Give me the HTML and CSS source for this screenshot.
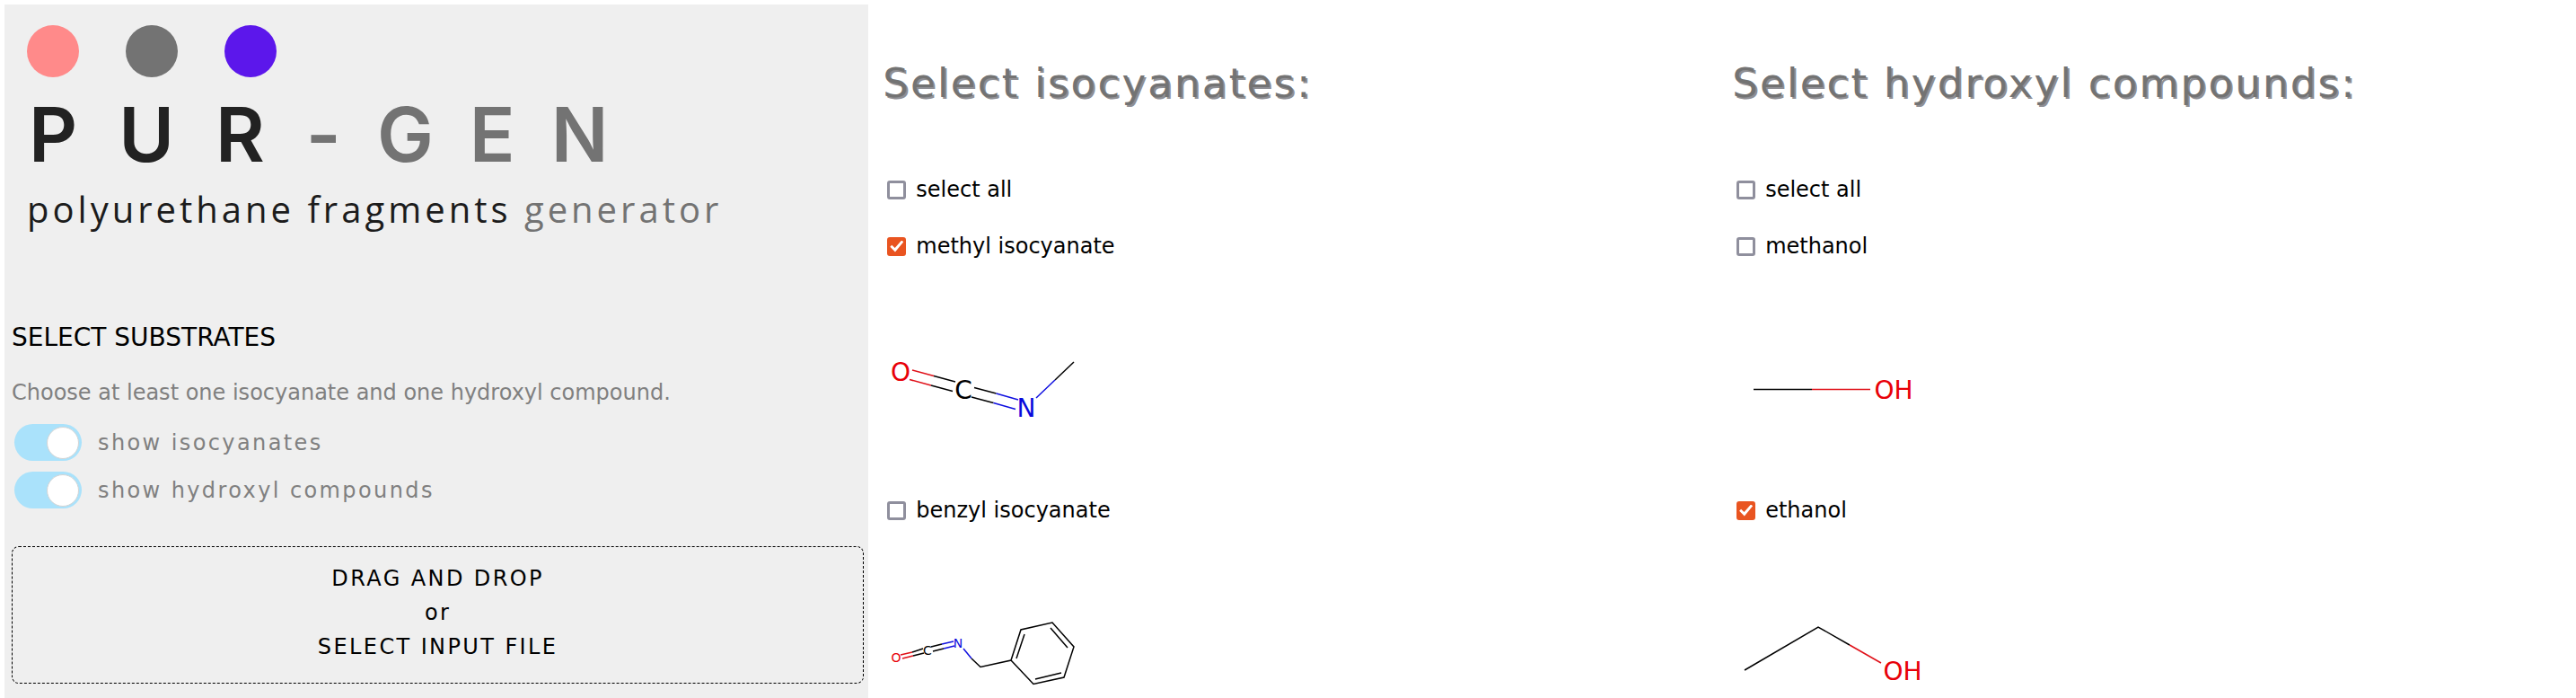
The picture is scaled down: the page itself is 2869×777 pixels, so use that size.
FILE: index.html
```html
<!DOCTYPE html>
<html lang="en">
<head>
<meta charset="utf-8">
<title>PUR-GEN</title>
<link rel="stylesheet" href="styles.css">
</head>
<body>
<div class="page">
  <aside class="panel">
    <header class="logo">
      <div class="dots"><span class="dot dot-pink"></span><span class="dot dot-gray"></span><span class="dot dot-violet"></span></div>
      <h1 class="brand">PUR<span class="muted">-GEN</span></h1>
      <p class="tagline">polyurethane fragments <span class="muted">generator</span></p>
    </header>
    <h2 class="panel-title">SELECT SUBSTRATES</h2>
    <p class="hint">Choose at least one isocyanate and one hydroxyl compound.</p>
    <div class="switches">
      <label class="switch"><input class="switch-input" type="checkbox" checked>show isocyanates</label>
      <label class="switch"><input class="switch-input" type="checkbox" checked>show hydroxyl compounds</label>
    </div>
    <button class="dropzone" type="button">DRAG AND DROP<br>or<br>SELECT INPUT FILE</button>
  </aside>
  <main class="columns">
    <section class="column">
      <h2 class="column-title">Select isocyanates:</h2>
      <label class="option"><input class="box" type="checkbox">select all</label>
      <label class="option"><input class="box" type="checkbox" checked>methyl isocyanate</label>
      <svg class="molecule" viewBox="0 0 240 196" role="img" aria-label="methyl isocyanate structure">
        <g class="bond-o"><path d="M33 89L57 95.500M30 99.500L54 106"/></g>
        <g class="bond-c"><path d="M57 95.500L81 102M54 106L78 112.500M102 108.500L126.500 115M99 119L123.500 125.500M192 100L213 80"/></g>
        <g class="bond-n"><path d="M126.500 115L151 122M123.500 125.500L148 132.500M171 120L192 100"/></g>
        <text class="atom atom-o" x="20" y="101">O</text>
        <text class="atom atom-c" x="90" y="121">C</text>
        <text class="atom atom-n" x="160" y="141">N</text>
      </svg>
      <label class="option"><input class="box" type="checkbox">benzyl isocyanate</label>
      <svg class="molecule" viewBox="0 0 240 196" role="img" aria-label="benzyl isocyanate structure">
        <g class="bond-o"><path d="M20 112L33 109M22 116L34 113"/></g>
        <g class="bond-c"><path d="M33 109L45 105M34 113L46 110M54 103L66 100M56 108L68 105M99 116L109 125.500L143 118L154 84L189 76L213 103L202 137L168 144.500L143 118M149 116L158 89M187 82L206 104M199 132L170 139"/></g>
        <g class="bond-n"><path d="M66 100L79 97M68 105L80 102M90 105L99 116"/></g>
        <text class="atom atom-small atom-o" x="15" y="120">O</text>
        <text class="atom atom-small atom-c" x="50" y="112">C</text>
        <text class="atom atom-small atom-n" x="84" y="104">N</text>
      </svg>
    </section>
    <section class="column">
      <h2 class="column-title">Select hydroxyl compounds:</h2>
      <label class="option"><input class="box" type="checkbox">select all</label>
      <label class="option"><input class="box" type="checkbox">methanol</label>
      <svg class="molecule" viewBox="0 0 240 196" role="img" aria-label="methanol structure">
        <path class="bond-c" d="M24 110.500H89"/>
        <path class="bond-o" d="M89 110.500H154"/>
        <text class="atom atom-o" x="180" y="121">OH</text>
      </svg>
      <label class="option"><input class="box" type="checkbox" checked>ethanol</label>
      <svg class="molecule" viewBox="0 0 240 196" role="img" aria-label="ethanol structure">
        <path class="bond-c" d="M14 129L96 81L131 101"/>
        <path class="bond-o" d="M131 101L166 121"/>
        <text class="atom atom-o" x="190" y="140">OH</text>
      </svg>
    </section>
  </main>
</div>
</body>
</html>
```
FILE: styles.css
```css
* { box-sizing: border-box; }
body {
  margin: 0;
  background: #fff;
  color: #000;
  font-family: "DejaVu Sans", sans-serif;
  font-size: 24px;
  line-height: 28px;
}
h1, h2, p { margin: 0; font-weight: 400; }
.page {
  display: grid;
  grid-template-columns: 33.6% 1fr;
  gap: 10px;
  height: 100vh;
  padding: 5px 0 0 5px;
  overflow: hidden;
}
.panel { background: #efefef; padding: 23px 5px 0 8px; }
.logo { padding-left: 17px; }
.dots { display: flex; gap: 52px; }
.dot { width: 58px; height: 58px; border-radius: 50%; }
.dot-pink { background: #ff8a8a; }
.dot-gray { background: #737373; }
.dot-violet { background: #5c17eb; }
.brand {
  margin-top: 14px;
  padding-left: 2px;
  color: #222;
  font-family: Inter, sans-serif;
  font-size: 84px;
  font-weight: 600;
  line-height: 100px;
  letter-spacing: 46px;
  white-space: nowrap;
}
.brand .muted { letter-spacing: 40px; }
.tagline {
  margin-top: 5px;
  color: #1c1c1c;
  font-family: "Open Sans", sans-serif;
  font-size: 40px;
  line-height: 56px;
  letter-spacing: 4px;
}
.brand .muted, .tagline .muted { color: #737373; }
.panel-title { margin-top: 98px; font-size: 28px; line-height: 34px; }
.hint { margin-top: 30px; color: #808080; }
.switches { display: grid; gap: 12px; margin-top: 21px; }
.switch {
  display: flex;
  align-items: center;
  gap: 18px;
  padding-left: 3px;
  color: #808080;
  letter-spacing: 0.1em;
}
.switch-input {
  appearance: none;
  display: flex;
  justify-content: flex-end;
  width: 75px;
  height: 41px;
  margin: 0;
  padding: 3px;
  border-radius: 21px;
  background: #aae2fb;
}
.switch-input::before {
  content: "";
  width: 34px;
  height: 34px;
  border: 1px solid #d4d4d4;
  border-radius: 50%;
  background: #fff;
}
.switch-input:not(:checked) { justify-content: flex-start; background: #ccc; }
.dropzone {
  display: block;
  width: 100%;
  margin-top: 42px;
  padding: 16px 0 21px;
  border: 1px dashed #000;
  border-radius: 8px;
  background: transparent;
  color: #000;
  font: inherit;
  line-height: 38px;
  letter-spacing: 0.1em;
}
.columns { display: grid; grid-template-columns: 1fr 1fr; }
.column { display: flex; flex-direction: column; align-items: flex-start; gap: 35px; padding: 60px 0 0 6px; }
.column-title {
  margin-bottom: 41px;
  color: #737373;
  font-size: 45px;
  line-height: 56px;
  letter-spacing: 0.05em;
  text-shadow: 2px 2px #8f8f94;
}
.option { display: flex; align-items: center; gap: 11px; padding-left: 5px; }
.box {
  appearance: none;
  display: grid;
  place-items: center;
  width: 21px;
  height: 21px;
  margin: 0;
  border: 3px solid #8f8f9d;
  border-radius: 3px;
  background: #fff;
}
.box:checked { border-color: #e95420; background: #e95420; }
.box:checked::before {
  content: "";
  width: 15px;
  height: 13px;
  background: #fff;
  clip-path: polygon(0 55%, 13% 40%, 36% 66%, 86% 0, 100% 13%, 38% 100%);
}
.molecule { flex: none; width: 240px; height: 196px; }
.bond-o, .bond-c, .bond-n { fill: none; stroke-width: 1.5; stroke: #000; }
.bond-o { stroke: #e01018; }
.bond-n { stroke: #1010e0; }
.atom { font-size: 28px; text-anchor: middle; }
.atom-small { font-size: 14px; }
.atom-o { fill: #e80008; }
.atom-n { fill: #0a0adc; }
```
